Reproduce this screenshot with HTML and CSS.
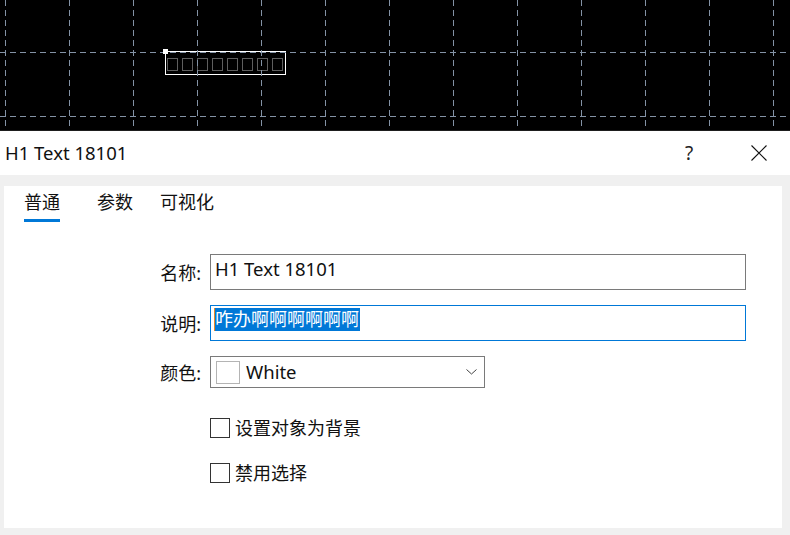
FILE: index.html
```html
<!DOCTYPE html>
<html lang="zh-CN">
<head>
    <meta charset="UTF-8">
    <title>H1 Text 18101</title>
    <link rel="stylesheet" href="styles.css">
</head>
<body>

    <div class="canvas">
        <svg width="790" height="131" viewBox="0 0 790 131">
            <rect x="0" y="0" width="790" height="131" fill="#000"/>
            <!-- selected text object -->
            <rect x="165.5" y="51.5" width="120" height="23" fill="none" stroke="#fff"/>
            <g fill="none" stroke="#5e5e5e">
                <rect x="167.5" y="58.5" width="10" height="12"/>
                <rect x="182.5" y="58.5" width="10" height="12"/>
                <rect x="197.5" y="58.5" width="10" height="12"/>
                <rect x="212.5" y="58.5" width="10" height="12"/>
                <rect x="227.5" y="58.5" width="10" height="12"/>
                <rect x="242.5" y="58.5" width="10" height="12"/>
                <rect x="257.5" y="58.5" width="10" height="12"/>
                <rect x="272.5" y="58.5" width="10" height="12"/>
            </g>
            <!-- grid -->
            <g stroke="#8493a6" stroke-dasharray="6 4">
                <line x1="0" y1="52.5" x2="790" y2="52.5"/>
                <line x1="0" y1="116.5" x2="790" y2="116.5"/>
                <line x1="5.5" y1="0" x2="5.5" y2="131"/>
                <line x1="69.5" y1="0" x2="69.5" y2="131"/>
                <line x1="133.5" y1="0" x2="133.5" y2="131"/>
                <line x1="197.5" y1="0" x2="197.5" y2="131"/>
                <line x1="261.5" y1="0" x2="261.5" y2="131"/>
                <line x1="325.5" y1="0" x2="325.5" y2="131"/>
                <line x1="389.5" y1="0" x2="389.5" y2="131"/>
                <line x1="453.5" y1="0" x2="453.5" y2="131"/>
                <line x1="517.5" y1="0" x2="517.5" y2="131"/>
                <line x1="581.5" y1="0" x2="581.5" y2="131"/>
                <line x1="645.5" y1="0" x2="645.5" y2="131"/>
                <line x1="709.5" y1="0" x2="709.5" y2="131"/>
                <line x1="773.5" y1="0" x2="773.5" y2="131"/>
            </g>
            <rect x="163" y="49" width="5" height="5" fill="#fff"/>
            <rect x="0" y="130" width="790" height="1" fill="#1e1e1e"/>
        </svg>
    </div>

    <div class="titlebar">
        <span class="title">H1 Text 18101</span>
        <div class="title-actions">
            <span class="title-btn help">?</span>
            <span class="title-btn">
                <svg width="16" height="16" viewBox="0 0 16 16">
                    <path d="M0.5 0.5 L15.5 15.5 M15.5 0.5 L0.5 15.5" stroke="#111" stroke-width="1.1" fill="none"/>
                </svg>
            </span>
        </div>
    </div>

    <div class="dialog">
        <div class="panel">
            <div class="tabs">
                <span class="tab active">普通</span>
                <span class="tab">参数</span>
                <span class="tab">可视化</span>
            </div>

            <div class="form">
                <div class="form-row">
                    <span class="form-label">名称:</span>
                    <div class="field">H1 Text 18101</div>
                </div>

                <div class="form-row">
                    <span class="form-label">说明:</span>
                    <div class="field focused"><span class="selection">咋办啊啊啊啊啊啊</span></div>
                </div>

                <div class="form-row">
                    <span class="form-label">颜色:</span>
                    <div class="color-select">
                        <span class="swatch"></span>
                        <span class="color-name">White</span>
                        <svg class="chevron" width="11" height="6" viewBox="0 0 11 6">
                            <path d="M0.5 0.5 L5.5 5 L10.5 0.5" stroke="#444" fill="none"/>
                        </svg>
                    </div>
                </div>

                <div class="check-row first">
                    <span class="checkbox"></span>
                    <span>设置对象为背景</span>
                </div>

                <div class="check-row">
                    <span class="checkbox"></span>
                    <span>禁用选择</span>
                </div>
            </div>
        </div>
    </div>

</body>
</html>
```

FILE: styles.css
```css
body {
    margin: 0;
    width: 790px;
    height: 535px;
    overflow: hidden;
    font-family: "Noto Sans", "Noto Sans CJK SC", sans-serif;
    font-size: 18px;
    color: #111;
    background-color: #f0f0f0;
}
.canvas {
    height: 131px;
    background-color: #000;
}
.canvas svg {
    display: block;
}
.titlebar {
    height: 44px;
    background-color: #fff;
    display: flex;
    align-items: center;
    justify-content: space-between;
    padding-left: 5px;
}
.title {
    font-size: 18.5px;
    margin-top: -2px;
}
.title-actions {
    display: flex;
    align-items: center;
    gap: 24px;
    padding-right: 8px;
}
.title-btn {
    width: 46px;
    height: 30px;
    display: flex;
    align-items: center;
    justify-content: center;
}
.help {
    font-size: 19px;
    color: #222;
    margin-top: -1px;
}
.dialog {
    height: 360px;
    box-sizing: border-box;
    padding: 11px 8px 7px 4px;
}
.panel {
    height: 342px;
    background-color: #fff;
}
.tabs {
    display: flex;
    padding-left: 20px;
}
.tab {
    line-height: 26px;
    padding: 3px 0 4px;
    border-bottom: 3px solid transparent;
    margin-right: 37px;
}
.tab:nth-child(2) {
    margin-right: 27px;
}
.tab.active {
    border-bottom-color: #0078d7;
}
.form {
    margin-top: 32px;
}
.form-row {
    display: flex;
    align-items: center;
    margin-bottom: 15px;
}
.form-label {
    width: 197px;
    margin-right: 9px;
    text-align: right;
    flex-shrink: 0;
}
.field {
    width: 536px;
    height: 36px;
    box-sizing: border-box;
    border: 1px solid #7a7a7a;
    padding: 2px 4px 0;
    line-height: 23px;
    font-size: 18.5px;
}
.field.focused {
    border-color: #0078d7;
    padding-left: 3px;
    font-size: 18px;
}
.selection {
    display: inline-block;
    background-color: #0078d7;
    color: #fff;
    border-left: 1px solid #e88a2a;
    padding-right: 1px;
}
.color-select {
    width: 275px;
    height: 32px;
    box-sizing: border-box;
    border: 1px solid #7a7a7a;
    display: flex;
    align-items: center;
    padding: 0 7px 0 5px;
}
.swatch {
    width: 24px;
    height: 23px;
    box-sizing: border-box;
    border: 1px solid #b4b4b4;
    background-color: #fff;
}
.color-name {
    margin-left: 6px;
    font-size: 18.5px;
    flex: 1;
    margin-top: -1px;
}
.chevron {
    display: block;
}
.check-row {
    display: flex;
    align-items: center;
    gap: 5px;
    margin-left: 206px;
    line-height: 24px;
    margin-top: 21px;
}
.check-row.first {
    margin-top: 28px;
}
.checkbox {
    width: 20px;
    height: 20px;
    box-sizing: border-box;
    border: 1px solid #333;
}
```
